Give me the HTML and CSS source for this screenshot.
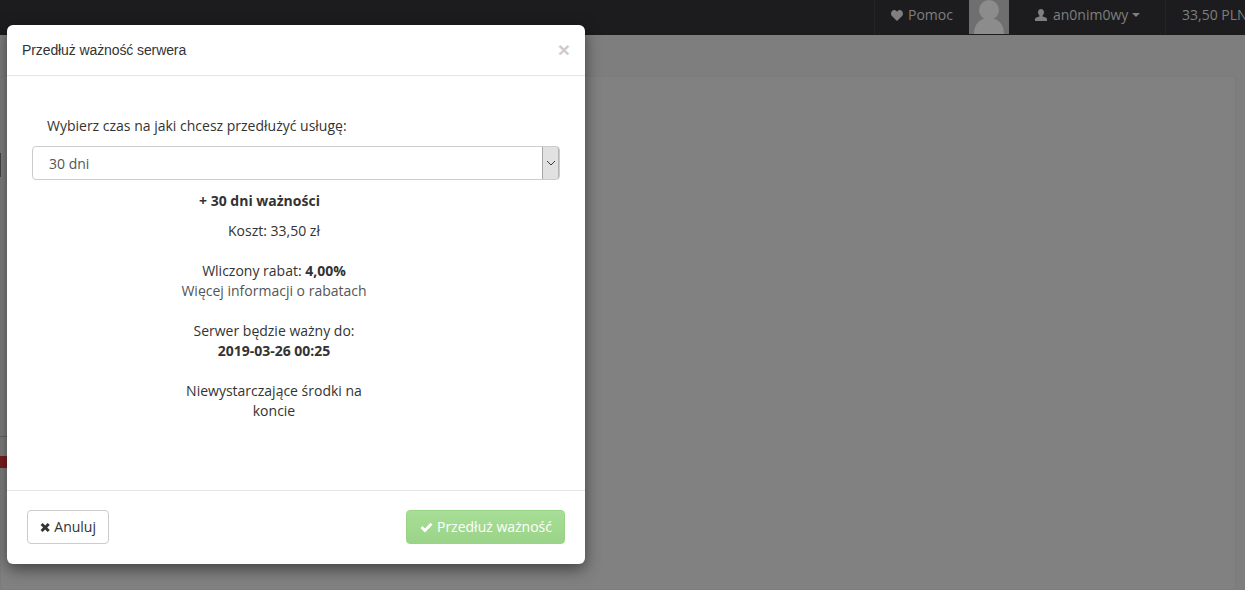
FILE: index.html
```html
<!DOCTYPE html>
<html lang="pl">
<head>
<meta charset="utf-8">
<title>Przedłuż ważność serwera</title>
<link rel="stylesheet" href="styles.css">
</head>
<body>
<header class="navbar">
  <div class="nav-item nav-help">
    <svg class="nav-icon" viewBox="0 0 12 11" width="12" height="11"><path d="M6 11 .9 6C-.4 4.600-.2 2.300 1 1.100 2.400-.3 4.800-.3 6 1.700 7.200-.3 9.600-.3 11 1.100c1.200 1.200 1.400 3.500.1 4.900z"/></svg>
    <span>Pomoc</span>
  </div>
  <div class="avatar">
    <svg viewBox="0 0 40 34" width="40" height="34"><circle cx="20" cy="10" r="10"/><path d="M5 34c0-10 6-16 15-16s15 6 15 16z"/></svg>
  </div>
  <div class="nav-item nav-user">
    <svg class="nav-icon" viewBox="0 0 12 12" width="12" height="12"><path d="M6 0c1.900 0 3 1.400 3 3.200 0 1.300-.6 2.500-1.400 3.200v1l3 1.100c.9.300 1.400.9 1.400 1.800V12H0v-1.700c0-.9.500-1.500 1.400-1.800l3-1.100v-1C3.600 5.700 3 4.500 3 3.200 3 1.400 4.100 0 6 0z"/></svg>
    <span>an0nim0wy</span>
    <i class="caret"></i>
  </div>
  <div class="nav-item nav-balance">33,50 PLN</div>
</header>
<main class="page">
  <section class="panel"></section>
</main>
<div class="edge-bits">
  <i class="edge-select"></i>
  <i class="edge-line"></i>
  <i class="edge-red"></i>
</div>
<div class="modal">
  <div class="modal-header">
    <h4 class="modal-title">Przedłuż ważność serwera</h4>
    <span class="close">×</span>
  </div>
  <div class="modal-body">
    <label class="select-label">Wybierz czas na jaki chcesz przedłużyć usługę:</label>
    <div class="select">
      <span class="select-value">30 dni</span>
      <span class="select-arrow"><svg viewBox="0 0 10 6" width="10" height="6"><path d="M1 1l4 4 4-4" fill="none" stroke="#3c3c3c" stroke-width="1"/></svg></span>
    </div>
    <div class="summary">
      <p class="line-plus"><b>+ 30 dni ważności</b></p>
      <p class="line-cost">Koszt: 33,50 zł</p>
      <p class="line-block">Wliczony rabat: <b>4,00%</b><br><a class="link">Więcej informacji o rabatach</a></p>
      <p class="line-block">Serwer będzie ważny do:<br><b>2019-03-26 00:25</b></p>
      <p class="line-block line-funds">Niewystarczające środki na koncie</p>
    </div>
  </div>
  <div class="modal-footer">
    <button class="btn btn-cancel"><svg viewBox="0 0 11 11" width="11" height="11"><path d="M2.800 .6 5.500 3.300 8.200 .6 10.400 2.800 7.700 5.500 10.400 8.200 8.200 10.400 5.500 7.700 2.800 10.400 .6 8.200 3.300 5.500 .6 2.800z" fill="#333"/></svg> Anuluj</button>
    <button class="btn btn-ok"><svg viewBox="0 0 13 11" width="13" height="11"><path d="M0.500 6 2.500 4 5 6.500 10.500.8 12.500 2.800 5 10.500z" fill="#fff"/></svg> Przedłuż ważność</button>
  </div>
</div>
</body>
</html>
```
FILE: styles.css
```css
* { box-sizing: border-box; }
html, body { margin: 0; height: 100%; overflow: hidden; }
body {
  background: #7e7e7e;
  font-family: "Open Sans", sans-serif;
  font-size: 14px;
  line-height: 20px;
  color: #333;
  position: relative;
}
.navbar {
  height: 35px;
  background: #1c1c1e;
  display: flex;
  justify-content: flex-end;
  color: #7f7f7f;
  white-space: nowrap;
}
.nav-item { display: flex; align-items: center; height: 30px; border-left: 1px solid #252527; }
.nav-icon { fill: #7f7f7f; flex: none; }
.nav-help { width: 95px; padding-left: 16px; gap: 5px; height: 34px; padding-bottom: 4px; }
.avatar { width: 40px; height: 34px; background: #6f6f6f; overflow: hidden; }
.avatar svg { display: block; fill: #8c8c8c; }
.nav-user { width: 156px; padding-left: 26px; gap: 6px; border-left: 0; }
.nav-balance { width: 80px; height: 34px; padding-left: 16px; padding-bottom: 4px; overflow: hidden; flex: none; }
.caret { border-top: 4px solid #7f7f7f; border-left: 4px solid transparent; border-right: 4px solid transparent; margin-left: -2px; }
.page { padding: 41px 9px 0 0; height: 555px; }
.panel { height: 514px; background: #818181; border: 1px solid #7c7c7c; border-radius: 4px; }
.edge-bits i { position: absolute; left: 0; display: block; }
.edge-select { top: 153px; width: 1px; height: 24px; background: #444; }
.edge-line { top: 436px; width: 7px; height: 1px; background: #666; }
.edge-red { top: 456px; width: 7px; height: 12px; background: #7c1f1f; }
.modal {
  position: absolute;
  left: 7px;
  top: 25px;
  width: 578px;
  height: 539px;
  background: #fff;
  border-radius: 6px;
  box-shadow: 0 5px 15px rgba(0,0,0,.5);
  display: flex;
  flex-direction: column;
}
.modal-header {
  height: 51px;
  border-bottom: 1px solid #e5e5e5;
  padding: 15px;
  display: flex;
  justify-content: space-between;
  align-items: center;
}
.modal-title { margin: 0; font: 400 14px/20px "Liberation Sans", Arial, sans-serif; letter-spacing: -.1px; color: #333; }
.close { font: 700 21px/21px "Liberation Sans", Arial, sans-serif; color: #000; opacity: .2; margin-top: -2px; }
.modal-body { flex: 1; padding: 40px 25px 0; }
.select-label { display: block; padding-left: 15px; margin-bottom: 10px; }
.select {
  height: 34px;
  width: 528px;
  border: 1px solid #ccc;
  border-radius: 4px;
  padding-left: 16px;
  display: flex;
  align-items: center;
  justify-content: space-between;
  color: #555;
}
.select-value { padding-top: 2px; }
.select-arrow {
  width: 17px;
  height: 32px;
  background: #e1e1e1;
  border-left: 1px solid #a6a6a6;
  border-right: 1px solid #b5b5b5;
  border-radius: 0 3px 3px 0;
  display: flex;
  align-items: center;
  justify-content: center;
}
.summary { width: 484px; text-align: center; padding-top: 11px; }
.summary p { margin: 0; }
.line-plus { margin-bottom: 10px !important; padding-right: 29px; }
.line-cost { margin-bottom: 20px !important; }
.line-block { margin-bottom: 20px !important; }
.line-funds { width: 200px; margin-left: 142px !important; }
.link { color: #555; }
.modal-footer {
  height: 74px;
  border-top: 1px solid #e5e5e5;
  padding: 19px 20px 20px;
  display: flex;
  justify-content: space-between;
  align-items: flex-start;
}
.btn {
  height: 34px;
  font: 400 14px/20px "Open Sans", sans-serif;
  border-radius: 4px;
  padding: 6px 12px;
  display: inline-flex;
  align-items: center;
  white-space: nowrap;
}
.btn-cancel { background: #fff; border: 1px solid #ccc; color: #333; width: 82px; gap: 4px; padding-left: 12px; }
.btn-ok { background: linear-gradient(#a8de97, #9ad488); border: 1px solid #98d386; color: #fff; width: 159px; gap: 4px; padding-left: 13px; }
```
